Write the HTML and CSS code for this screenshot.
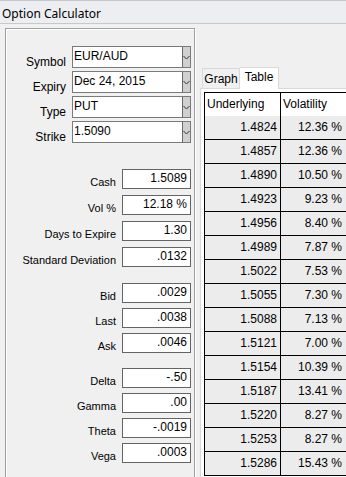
FILE: index.html
```html
<!DOCTYPE html>
<html lang="en">
<head>
    <meta charset="UTF-8">
    <meta name="viewport" content="width=device-width, initial-scale=1.0">
    <title>Option Calculator</title>
    <link rel="stylesheet" href="styles.css">
</head>
<body>
    <div class="window">
        <div class="title-bar">Option Calculator</div>

        <div class="window-body">
            <div class="input-panel">
                <div class="combo-grid">
                    <label>Symbol</label>
                    <div class="combo"><span class="combo-value">EUR/AUD</span><span class="combo-btn"><svg width="7" height="5" viewBox="0 0 7 5"><path d="M0.5 1 L3.5 4 L6.5 1" stroke="#333" fill="none"/></svg></span></div>
                    <label>Expiry</label>
                    <div class="combo"><span class="combo-value">Dec 24, 2015</span><span class="combo-btn"><svg width="7" height="5" viewBox="0 0 7 5"><path d="M0.5 1 L3.5 4 L6.5 1" stroke="#333" fill="none"/></svg></span></div>
                    <label>Type</label>
                    <div class="combo"><span class="combo-value">PUT</span><span class="combo-btn"><svg width="7" height="5" viewBox="0 0 7 5"><path d="M0.5 1 L3.5 4 L6.5 1" stroke="#333" fill="none"/></svg></span></div>
                    <label>Strike</label>
                    <div class="combo"><span class="combo-value">1.5090</span><span class="combo-btn"><svg width="7" height="5" viewBox="0 0 7 5"><path d="M0.5 1 L3.5 4 L6.5 1" stroke="#333" fill="none"/></svg></span></div>
                </div>

                <div class="field-grid market">
                    <label>Cash</label><div class="field">1.5089</div>
                    <label>Vol %</label><div class="field">12.18 %</div>
                    <label>Days to Expire</label><div class="field">1.30</div>
                    <label>Standard Deviation</label><div class="field">.0132</div>
                </div>

                <div class="field-grid quotes">
                    <label>Bid</label><div class="field">.0029</div>
                    <label>Last</label><div class="field">.0038</div>
                    <label>Ask</label><div class="field">.0046</div>
                </div>

                <div class="field-grid greeks">
                    <label>Delta</label><div class="field">-.50</div>
                    <label>Gamma</label><div class="field">.00</div>
                    <label>Theta</label><div class="field">-.0019</div>
                    <label>Vega</label><div class="field">.0003</div>
                </div>
            </div>

            <div class="tab-area">
                <div class="tab-strip">
                    <div class="tab tab-graph">Graph</div>
                    <div class="tab tab-table active">Table</div>
                </div>
                <div class="tab-panel">
                    <div class="data-grid">
                        <div class="grid-head">
                            <div class="cell col-under">Underlying</div>
                            <div class="cell col-vol">Volatility</div>
                        </div>
                        <div class="grid-row"><div class="cell col-under">1.4824</div><div class="cell col-vol">12.36 %</div></div>
                        <div class="grid-row"><div class="cell col-under">1.4857</div><div class="cell col-vol">12.36 %</div></div>
                        <div class="grid-row"><div class="cell col-under">1.4890</div><div class="cell col-vol">10.50 %</div></div>
                        <div class="grid-row"><div class="cell col-under">1.4923</div><div class="cell col-vol">9.23 %</div></div>
                        <div class="grid-row"><div class="cell col-under">1.4956</div><div class="cell col-vol">8.40 %</div></div>
                        <div class="grid-row"><div class="cell col-under">1.4989</div><div class="cell col-vol">7.87 %</div></div>
                        <div class="grid-row"><div class="cell col-under">1.5022</div><div class="cell col-vol">7.53 %</div></div>
                        <div class="grid-row"><div class="cell col-under">1.5055</div><div class="cell col-vol">7.30 %</div></div>
                        <div class="grid-row"><div class="cell col-under">1.5088</div><div class="cell col-vol">7.13 %</div></div>
                        <div class="grid-row"><div class="cell col-under">1.5121</div><div class="cell col-vol">7.00 %</div></div>
                        <div class="grid-row"><div class="cell col-under">1.5154</div><div class="cell col-vol">10.39 %</div></div>
                        <div class="grid-row"><div class="cell col-under">1.5187</div><div class="cell col-vol">13.41 %</div></div>
                        <div class="grid-row"><div class="cell col-under">1.5220</div><div class="cell col-vol">8.27 %</div></div>
                        <div class="grid-row"><div class="cell col-under">1.5253</div><div class="cell col-vol">8.27 %</div></div>
                        <div class="grid-row"><div class="cell col-under">1.5286</div><div class="cell col-vol">15.43 %</div></div>
                    </div>
                </div>
            </div>
        </div>
    </div>
</body>
</html>
```

FILE: styles.css
```css
body {
    margin: 0;
    padding: 0;
    background-color: #f0f0f0;
    font-family: "Liberation Sans", Arial, sans-serif;
    font-size: 11px;
    color: #000;
}
.window {
    width: 346px;
    height: 477px;
    overflow: hidden;
}
.title-bar {
    height: 24px;
    box-sizing: border-box;
    padding: 3px 0 0 2px;
    line-height: 20px;
    font-family: "Noto Sans", sans-serif;
    font-size: 12px;
    background-color: #eceef2;
    border-top: 1px solid #c4c6cc;
    border-bottom: 1px solid #c8c8c8;
}
.window-body {
    display: flex;
    padding: 4px 0 0 5px;
}
.input-panel {
    width: 190px;
    height: 470px;
    flex-shrink: 0;
    box-sizing: border-box;
    border: 1px solid #a0a0a0;
    box-shadow: inset 1px 1px 0 #fff, 1px 1px 0 #fff;
    padding-top: 17px;
}
label {
    text-align: right;
    align-self: end;
    line-height: 13px;
    white-space: nowrap;
}
.combo-grid {
    display: grid;
    grid-template-columns: 60px 119px;
    grid-auto-rows: 22px;
    column-gap: 6px;
    row-gap: 3px;
}
.combo-grid label {
    line-height: 12px;
    font-size: 12px;
}
.combo {
    display: flex;
    box-sizing: border-box;
    border: 1px solid #7a7a7a;
    background-color: #fff;
}
.combo-value {
    flex: 1;
    padding-left: 1px;
    line-height: 19px;
    font-size: 12px;
}
.combo-btn {
    width: 8px;
    box-sizing: border-box;
    border-left: 1px solid #6a6a6a;
    background-color: #d0d0d0;
    display: flex;
    align-items: center;
    justify-content: center;
}
.field-grid {
    display: grid;
    grid-template-columns: 110px 69px;
    grid-auto-rows: 20px;
    column-gap: 6px;
}
.market {
    margin-top: 26px;
    row-gap: 6px;
}
.quotes {
    margin-top: 16px;
    row-gap: 5px;
}
.greeks {
    margin-top: 15px;
    row-gap: 5px;
}
.field {
    box-sizing: border-box;
    border: 1px solid #646464;
    background-color: #fff;
    text-align: right;
    padding-right: 3px;
    line-height: 17px;
    font-size: 12px;
}
.tab-area {
    margin-left: 5px;
    padding-top: 39px;
    width: 160px;
    flex-shrink: 0;
}
.tab-strip {
    display: flex;
    align-items: flex-end;
    height: 21px;
    margin-left: 2px;
}
.tab {
    box-sizing: border-box;
    height: 20px;
    border: 1px solid #d9d9d9;
    border-bottom: none;
    text-align: center;
    line-height: 20px;
    font-size: 12px;
}
.tab-graph {
    width: 38px;
}
.tab-table {
    width: 39px;
    border-left: none;
}
.tab.active {
    height: 22px;
    margin-bottom: -1px;
    background-color: #fff;
    line-height: 19px;
    position: relative;
}
.tab-panel {
    border: 1px solid #d9d9d9;
    background-color: #fff;
    padding: 3px 0 0 3px;
    height: 400px;
}
.data-grid {
    border-left: 1px solid #000;
    border-top: 1px solid #000;
    width: 160px;
}
.grid-head {
    display: flex;
    height: 23px;
    background-color: #fff;
    line-height: 23px;
}
.grid-head .cell {
    text-align: left;
    padding-left: 2px;
}
.grid-row {
    display: flex;
    height: 24px;
    box-sizing: border-box;
    border-bottom: 1px solid #000;
    background-color: #ececec;
    line-height: 23px;
}
.cell {
    box-sizing: border-box;
    border-right: 1px solid #000;
    text-align: right;
    padding-right: 3px;
    font-size: 12px;
}
.col-under {
    width: 76px;
}
.col-vol {
    width: 64px;
    border-right: none;
}
```
